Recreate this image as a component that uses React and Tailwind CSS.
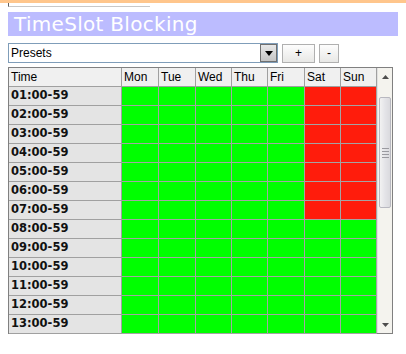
import React from 'react';

const days = ['Mon', 'Tue', 'Wed', 'Thu', 'Fri', 'Sat', 'Sun'];
const hours = ['01', '02', '03', '04', '05', '06', '07', '08', '09', '10', '11', '12', '13'];

// Sat/Sun blocked for the early hours
const isBlocked = (h, d) => h < 7 && d >= 5;

export default function App() {
  return (
    <div className="relative w-[406px] h-[354px] bg-white overflow-hidden" style={{ fontFamily: '"Liberation Sans", Arial, sans-serif' }}>
      {/* leftover bar from the page above */}
      <div className="h-[3px] bg-[#ffc68c]" />
      <div className="ml-[8px] w-[142px] h-[4px] border-l border-l-[#606060] border-b border-b-[#c8c8c8]" />

      {/* Title */}
      <div className="mx-[8px] mt-[5px] h-[24px] bg-[#bcbcff] flex items-center pl-[6px]">
        <span className="text-white text-[20px] leading-none tracking-[0.3px]" style={{ fontFamily: '"DejaVu Sans", Verdana, sans-serif' }}>
          TimeSlot Blocking
        </span>
      </div>

      {/* Presets row */}
      <div className="mx-[8px] mt-[7px] flex items-center h-[20px]">
        <div className="w-[270px] h-[20px] border border-[#7f9db9] bg-white flex items-center justify-between">
          <span className="pl-[2px] text-[12px] text-black">Presets</span>
          <div className="w-[17px] h-[18px] border border-[#707070] bg-[linear-gradient(#e8e8e8,#c4c4c4)] flex items-center justify-center">
            <svg width="8" height="5" viewBox="0 0 8 5"><path d="M0 0h8L4 5z" fill="#000" /></svg>
          </div>
        </div>
        <button className="ml-[4px] w-[33px] h-[19px] border border-[#b0b0b0] bg-[linear-gradient(#fdfdfd,#e8e8e6)] text-[12px] leading-none flex items-center justify-center">+</button>
        <button className="ml-[4px] w-[20px] h-[19px] border border-[#b0b0b0] bg-[linear-gradient(#fdfdfd,#e8e8e6)] text-[12px] leading-none flex items-center justify-center">-</button>
      </div>

      {/* Grid */}
      <div className="mx-[8px] mt-[4px] w-[385px] h-[267px] border border-[#808080] flex">
        <div className="grid grid-cols-[113px_37px_37px_36px_36px_37px_36px_36px] auto-rows-[19px] w-[368px] content-start">
          <div className="bg-[#f0f0f0] border-r border-b border-[#a0a0a0] text-[12px] pl-[2px] flex items-center">Time</div>
          {days.map(d => (
            <div key={d} className="bg-[#f0f0f0] border-r border-b border-[#a0a0a0] text-[12px] pl-[2px] flex items-center">{d}</div>
          ))}
          {hours.map((h, hi) => (
            <React.Fragment key={h}>
              <div className="bg-[#e4e4e4] border-r border-b border-[#a0a0a0] pl-[2px] flex items-center text-[11.5px] font-bold text-[#111]" style={{ fontFamily: '"DejaVu Sans", Verdana, sans-serif' }}>
                {h}:00-59
              </div>
              {days.map((d, di) => (
                <div key={d} className={`border-r border-b border-[#a4a4a4] ${isBlocked(hi, di) ? 'bg-[#ff1c0c]' : 'bg-[#00ff00]'}`} />
              ))}
            </React.Fragment>
          ))}
        </div>

        {/* scrollbar */}
        <div className="w-[15px] bg-[#f4f3ee] flex flex-col border-l border-[#e0e0e0]">
          <div className="h-[17px] flex items-center justify-center bg-[#f4f3ee]">
            <svg width="7" height="4" viewBox="0 0 7 4"><path d="M0 4h7L3.5 0z" fill="#4d4d4d" /></svg>
          </div>
          <div className="flex-1 px-[1px] pt-[12px]">
            <div className="h-[111px] rounded-[2px] border border-[#b8b8c0] bg-[linear-gradient(90deg,#f2f2f2,#e4e4e8,#dadade)] flex flex-col items-center justify-center gap-[2px]">
              <div className="w-[7px] h-px bg-[#9a9aa0]" />
              <div className="w-[7px] h-px bg-[#9a9aa0]" />
              <div className="w-[7px] h-px bg-[#9a9aa0]" />
              <div className="w-[7px] h-px bg-[#9a9aa0]" />
            </div>
          </div>
          <div className="h-[17px] flex items-center justify-center">
            <svg width="7" height="4" viewBox="0 0 7 4"><path d="M0 0h7L3.5 4z" fill="#4d4d4d" /></svg>
          </div>
        </div>
      </div>
    </div>
  );
}
